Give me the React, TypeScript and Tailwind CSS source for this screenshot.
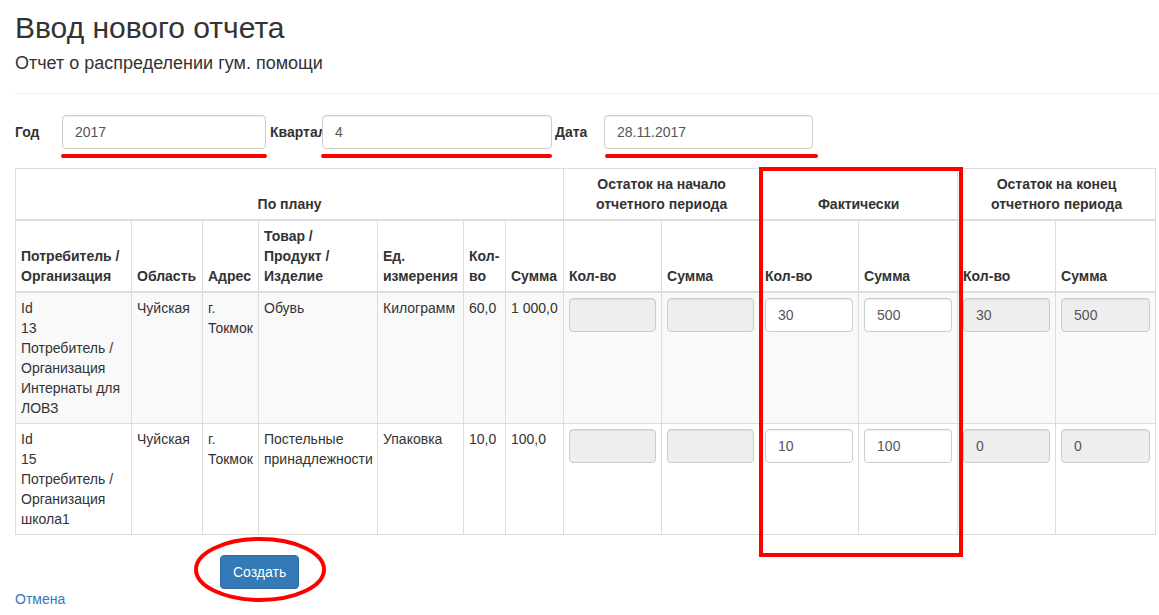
import React from "react";

const th = "border border-[#ddd] border-b-2 px-[5px] py-[5px] align-bottom text-left font-bold leading-5";
const thc = "border border-[#ddd] border-b-2 px-[5px] py-[5px] align-bottom text-center font-bold leading-5";
const td = "border border-[#ddd] px-[5px] py-[5px] align-top leading-5";

function Inp({ v, dis }: { v?: string; dis?: boolean }) {
  return (
    <input
      readOnly
      value={v ?? ""}
      className={
        "block h-[34px] w-full rounded-[4px] border border-[#ccc] px-[12px] text-[14px] text-[#555] shadow-[inset_0_1px_1px_rgba(0,0,0,0.075)] outline-none " +
        (dis ? "bg-[#eee]" : "bg-white")
      }
    />
  );
}

function Lines({ l }: { l: string[] }) {
  return (
    <>
      {l.map((s, i) => (
        <div key={i} className="whitespace-nowrap">
          {s}
        </div>
      ))}
    </>
  );
}

const rows = [
  {
    org: ["Id", "13", "Потребитель /", "Организация", "Интернаты для", "ЛОВЗ"],
    obl: "Чуйская",
    adr: ["г.", "Токмок"],
    tov: ["Обувь"],
    ed: "Килограмм",
    kol: "60,0",
    sum: "1 000,0",
    fk: "30",
    fs: "500",
    ek: "30",
    es: "500",
    bg: "bg-[#f9f9f9]",
  },
  {
    org: ["Id", "15", "Потребитель /", "Организация", "школа1"],
    obl: "Чуйская",
    adr: ["г.", "Токмок"],
    tov: ["Постельные", "принадлежности"],
    ed: "Упаковка",
    kol: "10,0",
    sum: "100,0",
    fk: "10",
    fs: "100",
    ek: "0",
    es: "0",
    bg: "bg-white",
  },
];

export default function App() {
  return (
    <div className="relative h-[615px] w-[1159px] overflow-hidden bg-white font-['Liberation_Sans',Arial,sans-serif] text-[14px] leading-5 text-[#333]">
      <div className="pl-[15px] pt-[11px]">
        <h2 className="text-[30px] leading-[33px] font-normal">Ввод нового отчета</h2>
        <h4 className="mt-[9px] text-[18px] leading-[20px] font-normal">Отчет о распределении гум. помощи</h4>
        <hr className="mt-[20px] border-0 border-t border-[#eee]" />

        <div className="mt-[21px] flex items-center">
          <label className="w-[47px] font-bold">Год</label>
          <div className="w-[204px]">
            <Inp v="2017" />
          </div>
          <label className="ml-[4px] w-[52px] whitespace-nowrap font-bold">Квартал</label>
          <div className="w-[230px]">
            <Inp v="4" />
          </div>
          <label className="ml-[3px] w-[49px] font-bold">Дата</label>
          <div className="w-[209px]">
            <Inp v="28.11.2017" />
          </div>
        </div>

        <table className="mt-[19px] w-[1140px] table-fixed border-collapse">
          <colgroup>
            <col className="w-[116px]" />
            <col className="w-[71px]" />
            <col className="w-[56px]" />
            <col className="w-[119px]" />
            <col className="w-[86px]" />
            <col className="w-[42px]" />
            <col className="w-[58px]" />
            <col className="w-[98px]" />
            <col className="w-[98px]" />
            <col className="w-[99px]" />
            <col className="w-[99px]" />
            <col className="w-[98px]" />
            <col className="w-[100px]" />
          </colgroup>
          <thead>
            <tr>
              <th colSpan={7} className={thc}>
                По плану
              </th>
              <th colSpan={2} className={thc}>
                <Lines l={["Остаток на начало", "отчетного периода"]} />
              </th>
              <th colSpan={2} className={thc}>
                Фактически
              </th>
              <th colSpan={2} className={thc}>
                <Lines l={["Остаток на конец", "отчетного периода"]} />
              </th>
            </tr>
            <tr>
              <th className={th}>
                <Lines l={["Потребитель /", "Организация"]} />
              </th>
              <th className={th}>Область</th>
              <th className={th}>Адрес</th>
              <th className={th}>
                <Lines l={["Товар /", "Продукт /", "Изделие"]} />
              </th>
              <th className={th}>
                <Lines l={["Ед.", "измерения"]} />
              </th>
              <th className={th}>
                <Lines l={["Кол-", "во"]} />
              </th>
              <th className={th}>Сумма</th>
              <th className={th}>Кол-во</th>
              <th className={th}>Сумма</th>
              <th className={th}>Кол-во</th>
              <th className={th}>Сумма</th>
              <th className={th}>Кол-во</th>
              <th className={th}>Сумма</th>
            </tr>
          </thead>
          <tbody>
            {rows.map((r, i) => (
              <tr key={i} className={r.bg}>
                <td className={td}>
                  <Lines l={r.org} />
                </td>
                <td className={td}>{r.obl}</td>
                <td className={td}>
                  <Lines l={r.adr} />
                </td>
                <td className={td}>
                  <Lines l={r.tov} />
                </td>
                <td className={td}>{r.ed}</td>
                <td className={td}>{r.kol}</td>
                <td className={td + " whitespace-nowrap"}>{r.sum}</td>
                <td className={td}>
                  <Inp dis />
                </td>
                <td className={td}>
                  <Inp dis />
                </td>
                <td className={td}>
                  <Inp v={r.fk} />
                </td>
                <td className={td}>
                  <Inp v={r.fs} />
                </td>
                <td className={td}>
                  <Inp v={r.ek} dis />
                </td>
                <td className={td}>
                  <Inp v={r.es} dis />
                </td>
              </tr>
            ))}
          </tbody>
        </table>

        <div className="ml-[205px] mt-[20px]">
          <button className="h-[34px] rounded-[4px] border border-[#2e6da4] bg-[#337ab7] px-[12px] text-[14px] text-white">
            Создать
          </button>
        </div>
        <a className="block w-fit text-[#337ab7]">Отмена</a>
      </div>

      {/* red annotations */}
      <div className="pointer-events-none absolute left-[61px] top-[154px] h-[4px] w-[206px] rounded-full bg-[#ff0000]" />
      <div className="pointer-events-none absolute left-[321px] top-[154px] h-[4px] w-[231px] rounded-full bg-[#ff0000]" />
      <div className="pointer-events-none absolute left-[605px] top-[154px] h-[4px] w-[213px] rounded-full bg-[#ff0000]" />
      <div className="pointer-events-none absolute left-[759px] top-[167px] h-[390px] w-[204px] border-4 border-[#ff0000]" />
      <svg className="pointer-events-none absolute left-[192px] top-[535px]" width="136" height="69" viewBox="0 0 136 69">
        <ellipse cx="68" cy="34.5" rx="64" ry="30.5" fill="none" stroke="#ff0000" strokeWidth="4" />
      </svg>
    </div>
  );
}
